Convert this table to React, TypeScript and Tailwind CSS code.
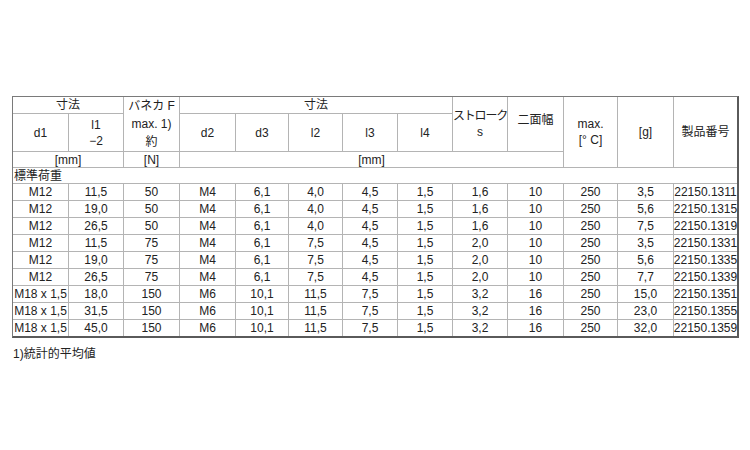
import React from "react";

const rows: string[][] = [
  ["M12", "11,5", "50", "M4", "6,1", "4,0", "4,5", "1,5", "1,6", "10", "250", "3,5", "22150.1311"],
  ["M12", "19,0", "50", "M4", "6,1", "4,0", "4,5", "1,5", "1,6", "10", "250", "5,6", "22150.1315"],
  ["M12", "26,5", "50", "M4", "6,1", "4,0", "4,5", "1,5", "1,6", "10", "250", "7,5", "22150.1319"],
  ["M12", "11,5", "75", "M4", "6,1", "7,5", "4,5", "1,5", "2,0", "10", "250", "3,5", "22150.1331"],
  ["M12", "19,0", "75", "M4", "6,1", "7,5", "4,5", "1,5", "2,0", "10", "250", "5,6", "22150.1335"],
  ["M12", "26,5", "75", "M4", "6,1", "7,5", "4,5", "1,5", "2,0", "10", "250", "7,7", "22150.1339"],
  ["M18 x 1,5", "18,0", "150", "M6", "10,1", "11,5", "7,5", "1,5", "3,2", "16", "250", "15,0", "22150.1351"],
  ["M18 x 1,5", "31,5", "150", "M6", "10,1", "11,5", "7,5", "1,5", "3,2", "16", "250", "23,0", "22150.1355"],
  ["M18 x 1,5", "45,0", "150", "M6", "10,1", "11,5", "7,5", "1,5", "3,2", "16", "250", "32,0", "22150.1359"],
];

const cell = "bg-white flex flex-col items-center justify-center whitespace-nowrap";

export default function App() {
  return (
    <div className="w-[750px] h-[450px] bg-white pt-[96px] pl-[12px] text-[12px] leading-[16px] text-[#222] font-['Liberation_Sans','Noto_Sans_CJK_JP',sans-serif]">
      <div className="grid w-max gap-px bg-[#b4b4b4] border-t border-l border-[#7a7a7a] border-r-2 border-b-2 border-r-[#5a5a5a] border-b-[#5a5a5a] grid-cols-[55px_54px_55px_55px_52px_53px_54px_54px_54px_55px_53px_55px_63px] grid-rows-[16px_37px_15px_15px_repeat(9,16px)]">
        {/* header row 1 */}
        <div className={`${cell} col-span-2`}>寸法</div>
        <div className={`${cell} row-span-2 leading-[18px]`}>
          <span>バネカ F</span>
          <span>max. 1)</span>
          <span>約</span>
        </div>
        <div className={`${cell} col-span-5`}>寸法</div>
        <div className={`${cell} row-span-2 overflow-visible`}>
          <span className="tracking-[-1.2px]">ストローク</span>
          <span>s</span>
        </div>
        <div className={`${cell} row-span-2 pb-[9px]`}>二面幅</div>
        <div className={`${cell} row-span-3`}>
          <span>max.</span>
          <span>[° C]</span>
        </div>
        <div className={`${cell} row-span-3`}>[g]</div>
        <div className={`${cell} row-span-3`}>製品番号</div>

        {/* header row 2 */}
        <div className={cell}>d1</div>
        <div className={cell}>
          <span>l1</span>
          <span>−2</span>
        </div>
        <div className={cell}>d2</div>
        <div className={cell}>d3</div>
        <div className={cell}>l2</div>
        <div className={cell}>l3</div>
        <div className={cell}>l4</div>

        {/* header row 3 */}
        <div className={`${cell} col-span-2`}>[mm]</div>
        <div className={cell}>[N]</div>
        <div className={`${cell} col-span-7`}>[mm]</div>

        {/* section row */}
        <div className="bg-white col-span-full flex items-center pl-px">標準荷重</div>

        {rows.map((r, i) =>
          r.map((v, j) => (
            <div key={`${i}-${j}`} className={cell}>
              {v}
            </div>
          ))
        )}
      </div>
      <div className="mt-[8px] pl-px">1)統計的平均値</div>
    </div>
  );
}
